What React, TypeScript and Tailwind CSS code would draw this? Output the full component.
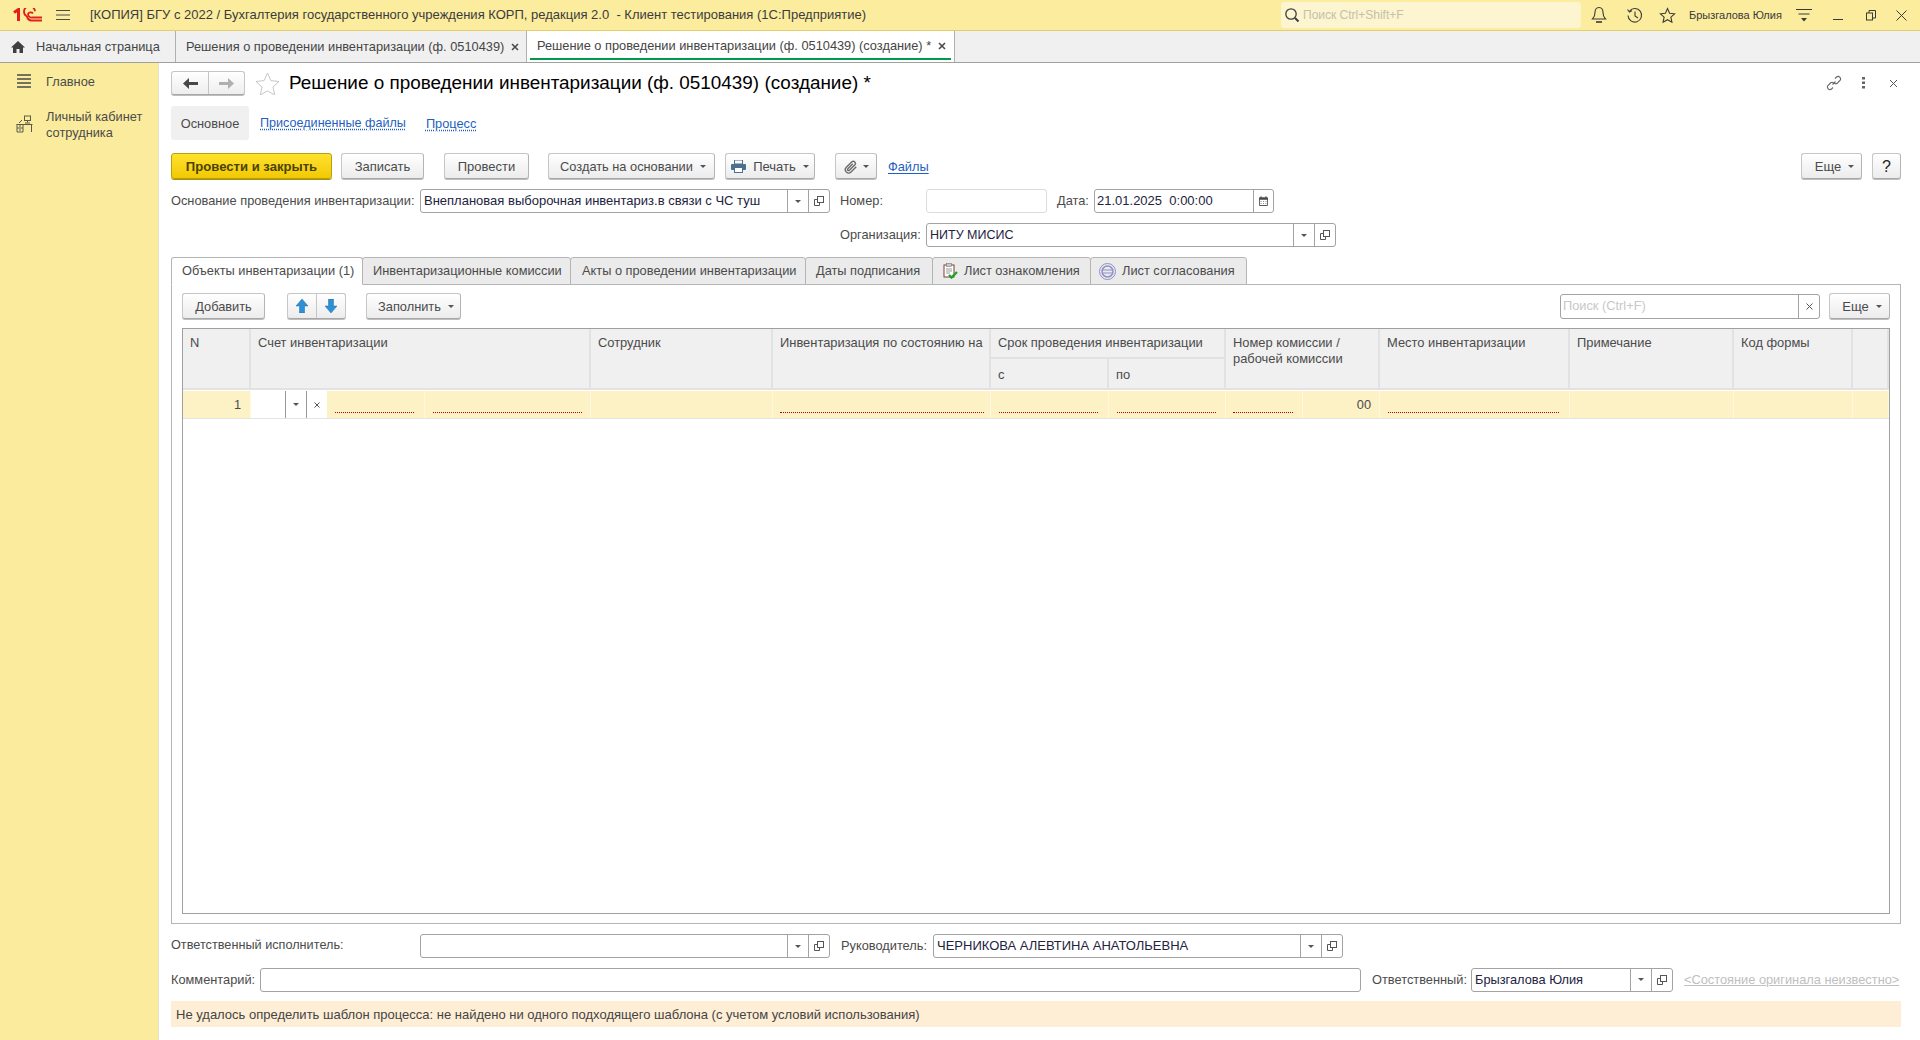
import React from "react";

const Caret = ({ c = "#555555" }: { c?: string }) => (
  <svg width="6" height="3" viewBox="0 0 6 3" className="shrink-0"><path d="M0 0h6L3 3z" fill={c} /></svg>
);

const OpenIcon = () => (
  <svg width="10" height="10" viewBox="0 0 10 10" fill="none" stroke="#555" strokeWidth="1">
    <rect x="3.500" y="0.500" width="6" height="6" />
    <path d="M3.500 3.500h-3v6h5v-3" />
  </svg>
);

const Btn = ({ w, ml = "", size = "text-[13px]", children }: { w: string; ml?: string; size?: string; children: React.ReactNode }) => (
  <div className={`${w} ${ml} ${size} h-[26px] shrink-0 flex items-center justify-center pt-[1px] rounded-[3px] border border-[#c6c6c6] border-b-[#a8a8a8] border-r-[#b4b4b4] bg-linear-to-b from-white to-[#ececec] shadow-[0_1px_0_#bdbdbd] text-[#4b4b4b]`}>
    {children}
  </div>
);

const Field = ({ cls, text, textCls = "text-[12.800px]", drop = true, open = true }: { cls: string; text?: string; textCls?: string; drop?: boolean; open?: boolean }) => (
  <div className={`${cls} h-[24px] shrink-0 flex items-stretch rounded-[3px] border border-[#a3a3a3] bg-white`}>
    <div className={`${textCls} flex-1 min-w-0 pl-[3px] flex items-center text-[#232340] whitespace-nowrap overflow-hidden`}>{text}</div>
    {drop && (
      <div className="w-[21px] border-l border-[#a3a3a3] flex items-center justify-center"><Caret /></div>
    )}
    {open && (
      <div className="w-[21px] border-l border-[#a3a3a3] flex items-center justify-center"><OpenIcon /></div>
    )}
  </div>
);

const Tab = ({ cls, active, children }: { cls: string; active?: boolean; children: React.ReactNode }) => (
  <div className={`${cls} shrink-0 h-[28px] flex items-center gap-[6px] rounded-t-[3px] border border-[#b5b5b5] -mr-px ${active ? "bg-white border-b-white z-10 relative" : "bg-[#ebebeb]"} pl-[10px] text-[#4b4b4b] whitespace-nowrap`}>
    {children}
  </div>
);

const Dot = ({ cls }: { cls: string }) => <div className={`${cls} h-0 border-b border-dotted border-[#b80000] self-end mb-[5px]`} />;

const hCell = "bg-[#f0f0f0] border-r-2 border-r-[#e2e2e2] border-b-2 border-b-[#e2e2e2] pl-[7px] pt-[6px] text-[#4b4b4b] leading-[16px] text-[12.900px]";
const rCell = "bg-[#fdf1c6] border-r border-r-[#fff8e0] flex";
const cols = "grid-cols-[68px_340px_182px_218px_118px_117px_154px_190px_164px_119px_36px]";

export default function App() {
  return (
    <div className="w-[1920px] h-[1040px] overflow-hidden flex flex-col bg-white text-[12.800px] text-[#4b4b4b] font-['Liberation_Sans',Arial,sans-serif]">
      {/* Title bar */}
      <div className="h-[31px] shrink-0 bg-[#fbec9e] border-b border-[#e2ce6e] flex items-center">
        <svg width="30" height="14" viewBox="0 0 30 14" className="ml-[13px] shrink-0" fill="none" stroke="#e1201c">
          <path d="M1 4.500 L5.500 1.500 V13" strokeWidth="3" />
          <path d="M22 3.200 A5.500 5.500 0 1 0 14 8.500 A5 5 0 0 0 18 12.500 H29" strokeWidth="1.800" />
          <path d="M20 5.500 A3 3 0 0 0 15 6 A3.500 3.500 0 0 0 19 9.500 H29" strokeWidth="1.800" />
        </svg>
        <svg width="14" height="12" viewBox="0 0 14 12" className="ml-[13px] shrink-0" stroke="#4a4a4a" strokeWidth="1"><path d="M0 1.500h14M0 6h14M0 10.500h14" /></svg>
        <div className="ml-[20px] text-[13px] text-[#3c3c3c] whitespace-nowrap w-[1191px]">[КОПИЯ] БГУ с 2022 / Бухгалтерия государственного учреждения КОРП, редакция 2.0&nbsp; - Клиент тестирования (1С:Предприятие)</div>
        <div className="w-[300px] h-[26px] shrink-0 rounded-[3px] bg-[#fcf5d0] flex items-center pl-[3px] text-[12px] text-[#c4c1ab]">
          <svg width="16" height="16" viewBox="0 0 16 16" fill="none" stroke="#3c3c3c" strokeWidth="1.300" className="mr-[3px]"><circle cx="7" cy="7" r="5.200" /><path d="M11 11l3.500 3.500" strokeWidth="2" /></svg>
          Поиск Ctrl+Shift+F
        </div>
        <svg width="16" height="18" viewBox="0 0 16 18" fill="none" stroke="#3a3a3a" strokeWidth="1.100" className="ml-[10px]"><path d="M8 1.500c-3 0-4 2.500-4 5 0 3-1 5-2.500 6.500h13C13 11.500 12 9.500 12 6.500c0-2.500-1-5-4-5z" /><path d="M5 16h6" strokeWidth="1.600" /></svg>
        <svg width="17" height="17" viewBox="0 0 17 17" fill="none" stroke="#3a3a3a" strokeWidth="1.100" className="ml-[19px]"><path d="M3.500 4A6.800 6.800 0 1 1 2 8.500" /><path d="M1.500 2.500l2 2.500 2.500-1.500" /><path d="M9 4.500V9l3 2" /></svg>
        <svg width="17" height="17" viewBox="0 0 17 17" fill="none" stroke="#3a3a3a" strokeWidth="1.100" className="ml-[16px]"><path d="M8.500 1.500l2.100 4.700 5 .6-3.700 3.400 1 5-4.400-2.500-4.400 2.500 1-5L1.400 6.800l5-.6z" /></svg>
        <div className="ml-[13px] text-[11px] text-[#3a3a3a] whitespace-nowrap w-[103px]">Брызгалова Юлия</div>
        <svg width="16" height="14" viewBox="0 0 16 14" stroke="#3a3a3a" strokeWidth="1" className="ml-[4px]"><path d="M0 1.500h16M2.500 6h11" /><path d="M5 10h6l-3 3.500z" fill="#3a3a3a" stroke="none" /></svg>
        <svg width="10" height="10" viewBox="0 0 10 10" stroke="#3a3a3a" strokeWidth="1" className="ml-[21px]"><path d="M0 9.500h10" /></svg>
        <svg width="10" height="11" viewBox="0 0 10 11" fill="none" stroke="#3a3a3a" strokeWidth="1" className="ml-[23px]"><rect x="0.500" y="3" width="6" height="7" /><path d="M3 3V.500h6.500V8H6.500" /></svg>
        <svg width="11" height="11" viewBox="0 0 11 11" stroke="#3a3a3a" strokeWidth="1" className="ml-[20px]"><path d="M.5.5l10 10M10.500.5l-10 10" /></svg>
      </div>
      {/* Tabs bar */}
      <div className="h-[32px] shrink-0 bg-[#f0f0f0] border-b border-[#a0a0a0] flex items-stretch text-[#454545]">
        <div className="w-[176px] shrink-0 border-r border-[#b0b0b0] flex items-center pl-[11px] pt-[1px]">
          <svg width="14" height="12" viewBox="0 0 14 12" fill="#404040" className="mr-[11px]"><path d="M7 0L0 6.500h2V12h3.500V8h3v4H12V6.500h2z" /></svg>
          Начальная страница
        </div>
        <div className="w-[351px] shrink-0 border-r border-[#b0b0b0] flex items-center pl-[10px] pt-[1px] whitespace-nowrap">
          Решения о проведении инвентаризации (ф. 0510439)
          <svg width="8" height="8" viewBox="0 0 8 8" stroke="#4a4a4a" strokeWidth="1.600" className="ml-[7px]"><path d="M1 1l6 6M7 1l-6 6" /></svg>
        </div>
        <div className="w-[428px] shrink-0 border-r border-[#b0b0b0] bg-white flex items-stretch px-[3px]">
          <div className="flex-1 border-b-2 border-[#009a4c] flex items-center pl-[7px] whitespace-nowrap mb-[2px] pt-[2px]">
            Решение о проведении инвентаризации (ф. 0510439) (создание) *
            <svg width="8" height="8" viewBox="0 0 8 8" stroke="#4a4a4a" strokeWidth="1.600" className="ml-[7px]"><path d="M1 1l6 6M7 1l-6 6" /></svg>
          </div>
        </div>
      </div>
      {/* Main */}
      <div className="flex-1 flex min-h-0">
        <div className="w-[159px] shrink-0 bg-[#fbec9d] border-r border-[#e4e0c8] pt-[10px]">
          <div className="flex items-center h-[16px]">
            <svg width="14" height="14" viewBox="0 0 14 14" stroke="#484848" strokeWidth="1.700" className="ml-[17px] mr-[15px]"><path d="M0 1h14M0 5h14M0 9h14M0 13h14" /></svg>
            <span className="pt-[1px]">Главное</span>
          </div>
          <div className="flex items-start mt-[19px] leading-[16px]">
            <svg width="17" height="18" viewBox="0 0 17 18" fill="none" stroke="#5a5a4a" strokeWidth="1" className="ml-[16px] mr-[13px] mt-[7px]"><path d="M.5 9.500h16M1 9.500v7.500h6v-7.500M15.500 9.500V17M1 13h6M3 11h2M3 15h2" /><rect x="8.500" y="1" width="6" height="4.500" /><path d="M11.500 5.500v2M9 8h5M3 8l3-3" /></svg>
            <div className="pt-[1px]">Личный кабинет<br />сотрудника</div>
          </div>
        </div>
        <div className="flex-1 min-w-0 pl-[12px] pr-[19px] pt-[8px] flex flex-col">
          {/* Header */}
          <div className="h-[24px] shrink-0 flex items-center">
            <div className="w-[74px] h-[24px] flex rounded-[3px] border border-[#c6c6c6] border-b-[#a8a8a8] bg-linear-to-b from-white to-[#eeeeee] shadow-[0_1px_0_#bdbdbd]">
              <div className="w-[37px] border-r border-[#c6c6c6] flex items-center justify-center">
                <svg width="15" height="11" viewBox="0 0 15 11" fill="#484848"><path d="M6 0L0 5.500 6 11V7h9V4H6z" /></svg>
              </div>
              <div className="flex-1 flex items-center justify-center">
                <svg width="15" height="11" viewBox="0 0 15 11" fill="#b0b0b0"><path d="M9 0l6 5.500L9 11V7H0V4h9z" /></svg>
              </div>
            </div>
            <svg width="25" height="23" viewBox="0 0 25 23" fill="none" stroke="#c4c8cc" strokeWidth="1" className="ml-[10px]"><path d="M12.500 1l3.400 7.600 8.100.9-6 5.500 1.700 8-7.200-4.100-7.200 4.100 1.700-8-6-5.500 8.100-.9z" /></svg>
            <div className="ml-[9px] pt-[1px] text-[18.900px] text-black whitespace-nowrap">Решение о проведении инвентаризации (ф. 0510439) (создание) *</div>
            <div className="flex-1" />
            <svg width="16" height="16" viewBox="0 0 16 16" fill="none" stroke="#666" strokeWidth="1.100" className="mr-[20px]"><path d="M6.500 9.500l3-3M9 3.500l1.500-1.500a2.500 2.500 0 0 1 3.500 3.500L11.500 8a2.500 2.500 0 0 1-3 .3M7 12.500L5.500 14A2.500 2.500 0 0 1 2 10.500L4.500 8a2.500 2.500 0 0 1 3-.3" /></svg>
            <svg width="3" height="12" viewBox="0 0 3 12" fill="#666" className="mr-[25px]"><rect width="3" height="2.500" /><rect y="4.500" width="3" height="2.500" /><rect y="9" width="3" height="2.500" /></svg>
            <svg width="7" height="7" viewBox="0 0 7 7" stroke="#555" strokeWidth="1" className="mr-[4px]"><path d="M0 0l7 7M7 0L0 7" /></svg>
          </div>
          {/* Form tabs */}
          <div className="h-[34px] mt-[11px] shrink-0 flex items-center">
            <div className="w-[78px] h-[34px] pt-[1px] rounded-[3px] bg-[#f0f0f0] flex items-center justify-center">Основное</div>
            <div className="ml-[11px] pt-[1px] text-[12.600px] text-[#1f5fbf] underline decoration-dotted underline-offset-2 whitespace-nowrap">Присоединенные файлы</div>
            <div className="ml-[20px] pt-[1px] text-[#1f5fbf] underline decoration-dotted underline-offset-2">Процесс</div>
          </div>
          {/* Command bar */}
          <div className="h-[26px] mt-[13px] shrink-0 flex items-center">
            <div className="w-[161px] h-[26px] pt-[1px] rounded-[3px] border border-[#b89f10] bg-linear-to-b from-[#ffe22a] to-[#f2c800] shadow-[0_1px_0_#a89000] flex items-center justify-center font-bold text-[13.100px] text-[#4a4300]">Провести и закрыть</div>
            <Btn w="w-[83px]" ml="ml-[9px]">Записать</Btn>
            <Btn w="w-[85px]" ml="ml-[20px]">Провести</Btn>
            <Btn w="w-[167px]" ml="ml-[19px]" size="text-[12.800px]"><span className="whitespace-nowrap mr-[7px] ml-[3px]">Создать на основании</span><Caret /></Btn>
            <Btn w="w-[90px]" ml="ml-[10px]">
              <svg width="15" height="13" viewBox="0 0 15 13" className="mr-[7px]"><rect x="3.500" y="0" width="8" height="4" fill="none" stroke="#4d6f8e" /><rect x="0" y="4" width="15" height="6" rx="1" fill="#4d6f8e" /><rect x="3.500" y="7.500" width="8" height="5" fill="#fff" stroke="#4d6f8e" /></svg>
              <span className="mr-[7px]">Печать</span><Caret />
            </Btn>
            <Btn w="w-[42px]" ml="ml-[20px]">
              <svg width="14" height="14" viewBox="0 0 24 24" fill="none" stroke="#6c6c6c" strokeWidth="2.400" className="mr-[5px]"><path d="M21 11.500l-9 9a5.500 5.500 0 0 1-8-8l9.500-9.500a3.700 3.700 0 0 1 5.200 5.200l-9.500 9.500a1.800 1.800 0 0 1-2.600-2.600l8.500-8.500" /></svg>
              <Caret />
            </Btn>
            <div className="ml-[11px] pt-[1px] text-[#1f5fbf] underline underline-offset-2">Файлы</div>
            <div className="flex-1" />
            <Btn w="w-[61px]"><span className="mr-[7px] ml-[6px]">Еще</span><Caret /></Btn>
            <Btn w="w-[29px]" ml="ml-[10px]"><span className="text-[16px] text-[#222]">?</span></Btn>
          </div>
          {/* Row 1 */}
          <div className="h-[24px] mt-[10px] shrink-0 flex items-center">
            <div className="w-[249px] shrink-0 whitespace-nowrap">Основание проведения инвентаризации:</div>
            <Field cls="w-[410px]" textCls="text-[13px]" text="Внеплановая выборочная инвентариз.в связи с ЧС туш" />
            <div className="w-[86px] ml-[10px] shrink-0">Номер:</div>
            <div className="w-[121px] h-[24px] shrink-0 rounded-[3px] border border-[#dcdcdc]" />
            <div className="w-[37px] ml-[10px] shrink-0">Дата:</div>
            <div className="w-[180px] h-[24px] shrink-0 rounded-[3px] border border-[#a3a3a3] flex items-stretch">
              <div className="flex-1 pl-[2px] flex items-center text-[13px] text-[#232340] whitespace-pre">21.01.2025  0:00:00</div>
              <div className="w-[20px] border-l border-[#a3a3a3] flex items-center justify-center">
                <svg width="9" height="10" viewBox="0 0 11 12"><rect y="1.500" width="11" height="10.500" rx="1" fill="#4b4b4b" /><rect x="1" y="4.500" width="9" height="6.500" fill="#fff" /><path d="M2.500 0v3M8.500 0v3" stroke="#4b4b4b" /><path d="M2 6h1v1H2zM5 6h1v1H5zM8 6h1v1H8zM2 8.500h1v1H2zM5 8.500h1v1H5zM8 8.500h1v1H8z" fill="#4b4b4b" /></svg>
              </div>
            </div>
          </div>
          {/* Row 2 */}
          <div className="h-[24px] mt-[10px] shrink-0 flex items-center pl-[669px]">
            <div className="w-[86px] shrink-0">Организация:</div>
            <Field cls="w-[410px]" textCls="text-[12.500px]" text="НИТУ МИСИС" />
          </div>
          {/* Tabs */}
          <div className="h-[28px] mt-[10px] shrink-0 flex items-start">
            <Tab cls="w-[192px]" active>Объекты инвентаризации (1)</Tab>
            <Tab cls="w-[209px]">Инвентаризационные комиссии</Tab>
            <Tab cls="w-[236px]"><span className="ml-[1px]">Акты о проведении инвентаризации</span></Tab>
            <Tab cls="w-[128px]">Даты подписания</Tab>
            <Tab cls="w-[159px]">
              <svg width="15" height="16" viewBox="0 0 15 16" className="shrink-0"><rect x="1" y="2" width="10" height="12" fill="#fff" stroke="#7a4030" /><rect x="3.500" y="0.500" width="5" height="3" fill="#c8c8c8" stroke="#666" strokeWidth=".5" /><path d="M3 6h6M3 8h6M3 10h4" stroke="#999" /><path d="M6 12l2.500 2.500L14 9" fill="none" stroke="#22a02a" strokeWidth="2.400" /></svg>
              <span>Лист ознакомления</span>
            </Tab>
            <Tab cls="w-[157px]">
              <svg width="17" height="17" viewBox="0 0 17 17" fill="none" stroke="#8f8fc8" className="shrink-0 -ml-[2px]"><circle cx="8.500" cy="8.500" r="8" /><circle cx="8.500" cy="8.500" r="5.500" strokeWidth="1.500" /><path d="M4 7h9M4 10h9" /></svg>
              <span>Лист согласования</span>
            </Tab>
          </div>
          {/* Panel */}
          <div className="h-[640px] -mt-px shrink-0 border border-[#b5b5b5] px-[10px] flex flex-col">
            <div className="h-[26px] mt-[8px] shrink-0 flex items-center">
              <Btn w="w-[83px]" size="text-[12.800px]">Добавить</Btn>
              <div className="ml-[22px] w-[59px] h-[26px] flex rounded-[3px] border border-[#c6c6c6] border-b-[#a8a8a8] bg-linear-to-b from-white to-[#ececec] shadow-[0_1px_0_#bdbdbd]">
                <div className="w-[29px] border-r border-[#c6c6c6] flex items-center justify-center">
                  <svg width="12" height="14" viewBox="0 0 12 14"><path d="M6 0l6 7H8.500v7h-5V7H0z" fill="#2f8fd4" stroke="#1c6eaa" strokeWidth=".5" /></svg>
                </div>
                <div className="flex-1 flex items-center justify-center">
                  <svg width="12" height="14" viewBox="0 0 12 14"><path d="M6 14L0 7h3.500V0h5v7H12z" fill="#2f8fd4" stroke="#1c6eaa" strokeWidth=".5" /></svg>
                </div>
              </div>
              <Btn w="w-[95px]" ml="ml-[20px]" size="text-[12.800px]"><span className="mr-[7px] ml-[5px]">Заполнить</span><Caret /></Btn>
              <div className="flex-1" />
              <div className="w-[260px] h-[25px] shrink-0 rounded-[3px] border border-[#a3a3a3] flex items-stretch">
                <div className="flex-1 pl-[2px] flex items-center text-[#c8c8c8]">Поиск (Ctrl+F)</div>
                <div className="w-[21px] border-l border-[#a3a3a3] flex items-center justify-center">
                  <svg width="7" height="7" viewBox="0 0 7 7" stroke="#555" strokeWidth="1"><path d="M.5.5l6 6M6.500.5l-6 6" /></svg>
                </div>
              </div>
              <Btn w="w-[61px]" ml="ml-[9px]"><span className="mr-[7px] ml-[5px]">Еще</span><Caret /></Btn>
            </div>
            {/* Table */}
            <div className="mt-[9px] h-[586px] shrink-0 border border-[#a0a0a0]">
              <div className={`grid ${cols} grid-rows-[30px_31px] h-[61px]`}>
                <div className={`${hCell} row-span-2`}>N</div>
                <div className={`${hCell} row-span-2`}>Счет инвентаризации</div>
                <div className={`${hCell} row-span-2`}>Сотрудник</div>
                <div className={`${hCell} row-span-2 whitespace-nowrap`}>Инвентаризация по состоянию на</div>
                <div className={`${hCell} col-span-2 whitespace-nowrap`}>Срок проведения инвентаризации</div>
                <div className={`${hCell} row-span-2`}>Номер комиссии /<br />рабочей комиссии</div>
                <div className={`${hCell} row-span-2`}>Место инвентаризации</div>
                <div className={`${hCell} row-span-2`}>Примечание</div>
                <div className={`${hCell} row-span-2`}>Код формы</div>
                <div className={`${hCell} row-span-2`} />
                <div className={`${hCell} !pt-[8px]`}>с</div>
                <div className={`${hCell} !pt-[8px]`}>по</div>
              </div>
              <div className={`grid ${cols} h-[28px] mt-[1px] border-b border-[#e4e4e4]`}>
                <div className={`${rCell} items-center justify-end pr-[9px]`}>1</div>
                <div className={rCell}>
                  <div className="w-[76px] shrink-0 bg-white flex">
                    <div className="w-[34px]" />
                    <div className="w-[21px] border-l border-[#9a9a9a] flex items-center justify-center"><Caret /></div>
                    <div className="w-[21px] border-l border-[#9a9a9a] flex items-center justify-center">
                      <svg width="6" height="6" viewBox="0 0 6 6" stroke="#555"><path d="M.5.5l5 5M5.500.5l-5 5" /></svg>
                    </div>
                  </div>
                  <div className="w-[98px] shrink-0 border-r border-[#fff8e0] flex pl-[8px]"><Dot cls="w-[79px]" /></div>
                  <div className="flex-1 flex pl-[8px]"><Dot cls="w-[149px]" /></div>
                </div>
                <div className={rCell} />
                <div className={`${rCell} pl-[7px]`}><Dot cls="w-[204px]" /></div>
                <div className={`${rCell} pl-[8px]`}><Dot cls="w-[99px]" /></div>
                <div className={`${rCell} pl-[8px]`}><Dot cls="w-[99px]" /></div>
                <div className={rCell}>
                  <div className="w-[77px] shrink-0 border-r border-[#fff8e0] flex pl-[7px]"><Dot cls="w-[60px]" /></div>
                  <div className="flex-1 flex items-center justify-end pr-[8px]">00</div>
                </div>
                <div className={`${rCell} pl-[8px]`}><Dot cls="w-[171px]" /></div>
                <div className={rCell} />
                <div className={rCell} />
                <div className={rCell} />
              </div>
            </div>
          </div>
          {/* Bottom row A */}
          <div className="h-[24px] mt-[10px] shrink-0 flex items-center">
            <div className="w-[249px] shrink-0 text-[12.700px] whitespace-nowrap">Ответственный исполнитель:</div>
            <Field cls="w-[410px]" />
            <div className="w-[92px] ml-[11px] shrink-0 whitespace-nowrap">Руководитель:</div>
            <Field cls="w-[410px]" textCls="text-[13px]" text="ЧЕРНИКОВА АЛЕВТИНА АНАТОЛЬЕВНА" />
          </div>
          {/* Bottom row B */}
          <div className="h-[25px] mt-[9px] shrink-0 flex items-center">
            <div className="w-[89px] shrink-0 whitespace-nowrap">Комментарий:</div>
            <Field cls="w-[1101px]" drop={false} open={false} />
            <div className="w-[99px] ml-[11px] shrink-0 whitespace-nowrap">Ответственный:</div>
            <Field cls="w-[202px]" text="Брызгалова Юлия" />
            <div className="ml-[11px] text-[#c0c0c0] underline whitespace-nowrap">&lt;Состояние оригинала неизвестно&gt;</div>
          </div>
          {/* Message */}
          <div className="h-[26px] mt-[9px] shrink-0 bg-[#feeed6] pl-[5px] pt-[1px] flex items-center text-[13px] text-[#444]">
            Не удалось определить шаблон процесса: не найдено ни одного подходящего шаблона (с учетом условий использования)
          </div>
        </div>
      </div>
    </div>
  );
}
